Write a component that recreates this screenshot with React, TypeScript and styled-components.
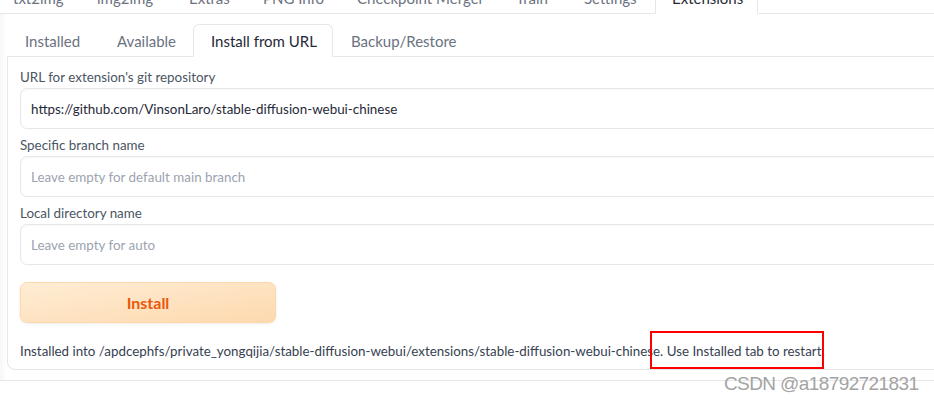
import React from "react";
import styled, { createGlobalStyle } from "styled-components";

const Global = createGlobalStyle`
  html, body { margin: 0; padding: 0; background: #ffffff; overflow: hidden; }
  body { font-family: Lato, "Noto Sans", sans-serif; width: 934px; height: 401px; }
  * { box-sizing: border-box; }
`;

const Page = styled.div`
  position: relative;
  width: 1000px;
  height: 401px;
`;

const TopNav = styled.div`
  display: flex;
  align-items: flex-end;
  height: 14px;
  margin-left: -4px;
  border-bottom: 1px solid #e5e7eb;
`;

const TopTab = styled.div<{ $w: number; $active?: boolean }>`
  flex: none;
  width: ${(p) => p.$w}px;
  height: 33px;
  margin-bottom: -1px;
  padding-left: 16px;
  display: flex;
  align-items: center;
  font-size: 15px;
  white-space: nowrap;
  color: ${(p) => (p.$active ? "#1f2937" : "#6b7280")};
  background: ${(p) => (p.$active ? "#ffffff" : "transparent")};
  border: 1px solid ${(p) => (p.$active ? "#e5e7eb" : "transparent")};
  border-bottom-color: ${(p) => (p.$active ? "#ffffff" : "transparent")};
  border-radius: 6px 6px 0 0;
`;

const Outer = styled.div`
  padding: 0 0 10px 7px;
  border-bottom: 1px solid #e5e7eb;
  background: linear-gradient(to right, #f6f7f8 0px, #ffffff 7px);
`;

const SubNav = styled.div`
  display: flex;
  align-items: flex-end;
  height: 43px;
  border-bottom: 1px solid #e5e7eb;
  background: #ffffff;
`;

const SubTab = styled.div<{ $w: number; $active?: boolean }>`
  flex: none;
  width: ${(p) => p.$w}px;
  height: 33px;
  margin-bottom: -1px;
  padding-left: 17px;
  display: flex;
  align-items: center;
  font-size: 15px;
  white-space: nowrap;
  color: ${(p) => (p.$active ? "#1f2937" : "#6b7280")};
  background: ${(p) => (p.$active ? "#ffffff" : "transparent")};
  border: 1px solid ${(p) => (p.$active ? "#e5e7eb" : "transparent")};
  border-bottom-color: ${(p) => (p.$active ? "#ffffff" : "transparent")};
  border-radius: 6px 6px 0 0;
`;

const Panel = styled.div`
  display: flex;
  flex-direction: column;
  align-items: stretch;
  background: #ffffff;
  border: 1px solid #e5e7eb;
  border-top: none;
  border-radius: 0 0 8px 8px;
  padding: 10px 12px 8px 12px;
`;

const Field = styled.div`
  display: flex;
  flex-direction: column;
  margin-bottom: 6px;
`;

const Label = styled.span`
  font-size: 13.4px;
  line-height: 20px;
  color: #4b5563;
  margin-bottom: 1px;
`;

const Input = styled.div<{ $placeholder?: boolean }>`
  height: 41px;
  display: flex;
  align-items: center;
  padding: 0 10px;
  border: 1px solid #e5e7eb;
  border-radius: 7px;
  background: #ffffff;
  box-shadow: inset 0 1px 2px rgba(0, 0, 0, 0.04);
  font-size: 13.4px;
  color: ${(p) => (p.$placeholder ? "#9ca3af" : "#1f2937")};
`;

const InstallButton = styled.button`
  display: flex;
  align-items: center;
  justify-content: center;
  align-self: flex-start;
  width: 256px;
  height: 41px;
  margin-top: 11px;
  border: 1px solid #fed7aa;
  border-radius: 7px;
  background: linear-gradient(to bottom right, #ffedd5 0%, #fdd9ae 100%);
  box-shadow: 0 1px 3px rgba(0, 0, 0, 0.08);
  font-family: inherit;
  font-size: 16px;
  font-weight: 700;
  color: #ea580c;
`;

const Status = styled.div`
  margin-top: 18px;
  font-size: 13.35px;
  line-height: 20px;
  color: #374151;
  white-space: nowrap;
`;

const Highlight = styled.div`
  position: absolute;
  left: 650px;
  top: 331px;
  width: 174px;
  height: 38px;
  border: 2px solid #ff0000;
`;

const Watermark = styled.div`
  position: absolute;
  left: 724px;
  top: 373px;
  font-family: "Liberation Sans", Arial, sans-serif;
  font-size: 19px;
  letter-spacing: -0.6px;
  color: #a3a3a3;
  white-space: nowrap;
`;

const topTabs = [
  { label: "txt2img", w: 84 },
  { label: "img2img", w: 92 },
  { label: "Extras", w: 74 },
  { label: "PNG Info", w: 94 },
  { label: "Checkpoint Merger", w: 159 },
  { label: "Train", w: 68 },
  { label: "Settings", w: 88 },
  { label: "Extensions", w: 103, active: true },
];

const subTabs = [
  { label: "Installed", w: 92 },
  { label: "Available", w: 94 },
  { label: "Install from URL", w: 140, active: true },
  { label: "Backup/Restore", w: 140 },
];

export default function App() {
  return (
    <Page>
      <Global />
      <TopNav>
        {topTabs.map((t) => (
          <TopTab key={t.label} $w={t.w} $active={t.active}>
            {t.label}
          </TopTab>
        ))}
      </TopNav>
      <Outer>
        <SubNav>
          {subTabs.map((t) => (
            <SubTab key={t.label} $w={t.w} $active={t.active}>
              {t.label}
            </SubTab>
          ))}
        </SubNav>
        <Panel>
          <Field>
            <Label>URL for extension's git repository</Label>
            <Input>https://github.com/VinsonLaro/stable-diffusion-webui-chinese</Input>
          </Field>
          <Field>
            <Label>Specific branch name</Label>
            <Input $placeholder>Leave empty for default main branch</Input>
          </Field>
          <Field>
            <Label>Local directory name</Label>
            <Input $placeholder>Leave empty for auto</Input>
          </Field>
          <InstallButton>Install</InstallButton>
          <Status>
            Installed into /apdcephfs/private_yongqijia/stable-diffusion-webui/extensions/stable-diffusion-webui-chinese. Use Installed tab to restart.
          </Status>
        </Panel>
      </Outer>
      <Highlight />
      <Watermark>CSDN @a18792721831</Watermark>
    </Page>
  );
}
